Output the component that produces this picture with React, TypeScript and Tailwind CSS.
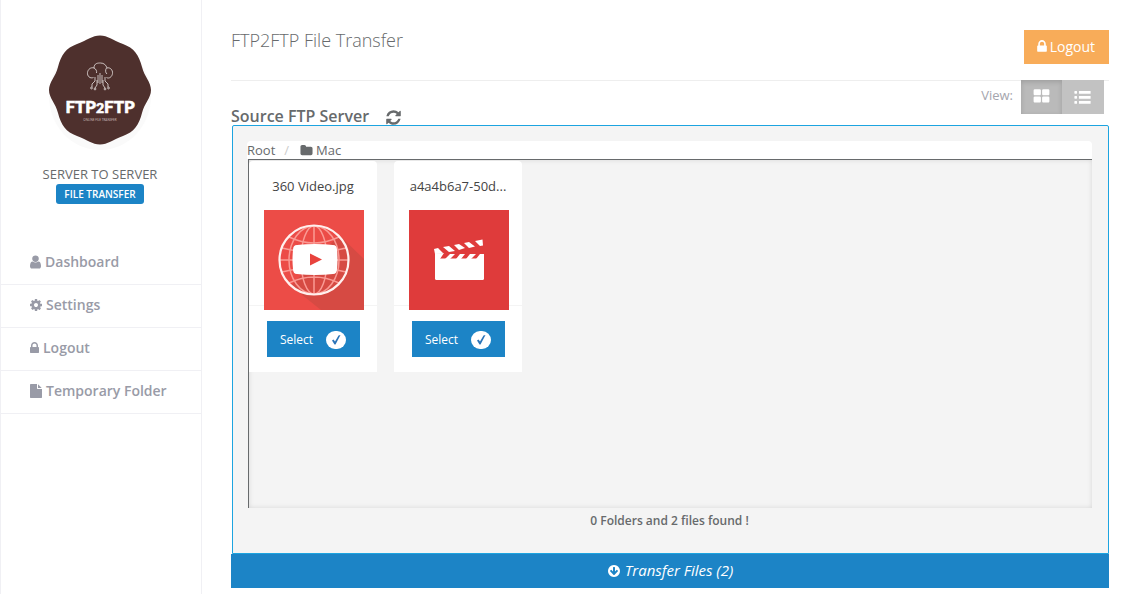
import { useState } from "react";
import type { ReactNode } from "react";
import clsx from "clsx";

const ICONS = {
  user: "M1536 1399q0 109-62.5 187t-150.5 78h-854q-88 0-150.5-78t-62.5-187q0-85 8.5-160.5t31.5-152 58.5-131 94-89 134.5-34.5q131 128 313 128t313-128q76 0 134.5 34.5t94 89 58.5 131 31.5 152 8.5 160.5zm-256-887q0 159-112.5 271.5t-271.5 112.5-271.5-112.5-112.5-271.5 112.5-271.5 271.5-112.5 271.5 112.5 112.5 271.5z",
  cog: "M1152 896q0-106-75-181t-181-75-181 75-75 181 75 181 181 75 181-75 75-181zm512-109v222q0 12-8 23t-20 13l-185 28q-19 54-39 91 35 50 107 138 10 12 10 25t-9 23q-27 37-99 108t-94 71q-12 0-26-9l-138-108q-44 23-91 38-16 136-29 186-7 28-36 28h-222q-14 0-24.5-8.5t-11.5-21.5l-28-184q-49-16-90-37l-141 107q-10 9-25 9-14 0-25-11-126-114-165-168-7-10-7-23 0-12 8-23 15-21 51-66.5t54-70.5q-27-50-41-99l-183-27q-13-2-21-12.5t-8-23.5v-222q0-12 8-23t19-13l186-28q14-46 39-92-40-57-107-138-10-12-10-24 0-10 9-23 26-36 98.5-107.5t94.5-71.5q13 0 26 10l138 107q44-23 91-38 16-136 29-186 7-28 36-28h222q14 0 24.5 8.5t11.5 21.5l28 184q49 16 90 37l142-107q9-9 24-9 13 0 25 10 129 119 165 170 7 8 7 22 0 12-8 23-15 21-51 66.5t-54 70.5q26 50 41 98l183 28q13 2 21 12.5t8 23.5z",
  lock: "M640 768h512v-192q0-106-75-181t-181-75-181 75-75 181v192zm832 96v576q0 40-28 68t-68 28h-960q-40 0-68-28t-28-68v-576q0-40 28-68t68-28h32v-192q0-184 132-316t316-132 316 132 132 316v192h32q40 0 68 28t28 68z",
  file: "M1152 512v-472q22 14 36 28l408 408q14 14 28 36h-472zm-128 32q0 40 28 68t68 28h544v1056q0 40-28 68t-68 28h-1344q-40 0-68-28t-28-68v-1600q0-40 28-68t68-28h800v544z",
  refresh: "M1639 1056q0 5-1 7-64 268-268 434.5t-478 166.5q-146 0-282.5-55t-243.5-157l-129 129q-19 19-45 19t-45-19-19-45v-448q0-26 19-45t45-19h448q26 0 45 19t19 45-19 45l-137 137q71 66 161 102t187 36q134 0 250-65t186-179q11-17 53-117 8-23 30-23h192q13 0 22.5 9.5t9.5 22.5zm25-800v448q0 26-19 45t-45 19h-448q-26 0-45-19t-19-45 19-45l138-138q-148-137-349-137-134 0-250 65t-186 179q-11 17-53 117-8 23-30 23h-199q-13 0-22.5-9.5t-9.5-22.5v-7q65-268 270-434.5t480-166.5q146 0 284 55.5t245 156.5l130-129q19-19 45-19t45 19 19 45z",
  folder: "M1728 608v704q0 92-66 158t-158 66h-1216q-92 0-158-66t-66-158v-960q0-92 66-158t158-66h320q92 0 158 66t66 158v32h672q92 0 158 66t66 158z",
  arrowDown: "M1412 897q0-27-18-45l-91-91q-18-18-45-18t-45 18l-189 189v-502q0-26-19-45t-45-19h-128q-26 0-45 19t-19 45v502l-189-189q-19-19-45-19t-45 19l-91 91q-18 18-18 45t18 45l362 362 91 91q18 18 45 18t45-18l91-91 362-362q18-18 18-45zm252-1q0 209-103 385.5t-279.5 279.5-385.5 103-385.5-103-279.5-279.5-103-385.5 103-385.5 279.5-279.5 385.5-103 385.5 103 279.5 279.5 103 385.5z",
  thLarge: "M832 1024v384q0 52-38 90t-90 38h-512q-52 0-90-38t-38-90v-384q0-52 38-90t90-38h512q52 0 90 38t38 90zm0-768v384q0 52-38 90t-90 38h-512q-52 0-90-38t-38-90v-384q0-52 38-90t90-38h512q52 0 90 38t38 90zm896 768v384q0 52-38 90t-90 38h-512q-52 0-90-38t-38-90v-384q0-52 38-90t90-38h512q52 0 90 38t38 90zm0-768v384q0 52-38 90t-90 38h-512q-52 0-90-38t-38-90v-384q0-52 38-90t90-38h512q52 0 90 38t38 90z",
  list: "M100 210h160q60 0 60 60v160q0 60-60 60h-160q-60 0-60-60v-160q0-60 60-60zM520 210h1232v280h-1232zM100 740h160q60 0 60 60v160q0 60-60 60h-160q-60 0-60-60v-160q0-60 60-60zM520 740h1232v280h-1232zM100 1270h160q60 0 60 60v160q0 60-60 60h-160q-60 0-60-60v-160q0-60 60-60zM520 1270h1232v280h-1232z",
};

type IconName = keyof typeof ICONS;

// viewBox is trimmed per icon so the glyph keeps its own advance width
function Icon({ name, box = "0 0 1792 1792", className }: { name: IconName; box?: string; className?: string }) {
  return (
    <svg viewBox={box} fill="currentColor" aria-hidden="true" className={clsx("shrink-0", className)}>
      <path d={ICONS[name]} />
    </svg>
  );
}

const NAV: { label: string; icon: IconName; box: string; size: string }[] = [
  { label: "Dashboard", icon: "user", box: "256 0 1280 1792", size: "w-[11px] h-4" },
  { label: "Settings", icon: "cog", box: "128 0 1536 1792", size: "w-3 h-[14px]" },
  { label: "Logout", icon: "lock", box: "320 0 1152 1792", size: "w-[9px] h-[14px]" },
  { label: "Temporary Folder", icon: "file", box: "128 0 1536 1792", size: "w-3 h-[14px]" },
];

function Logo() {
  return (
    <svg viewBox="0 0 110 120" className="h-[120px] w-[110px]" role="img" aria-label="FTP2FTP">
      <ellipse cx="55" cy="66" rx="51" ry="54" fill="#fafafa" />
      <path
        d="M55 5.500C63 5.500 67 10 78 14C89 18 94 25 97 37C99.500 47 106 52 106 60C106 68 99.500 73 97 83C94 95 89 102 78 106C67 110 63 114.500 55 114.500C47 114.500 43 110 32 106C21 102 16 95 13 83C10.500 73 4 68 4 60C4 52 10.500 47 13 37C16 25 21 18 32 14C43 10 47 5.500 55 5.500Z"
        fill="#4e302d"
      />
      <g fill="none" stroke="#e9e2e1" strokeWidth="0.800">
        <path d="M48.500 47.500C45 49 42 46 42.500 42.500C43 39 46 37 49 38C49 33 53 33 55.500 33C59 33 61 35 62 38C65 37 68 40 67.500 43.500C67 47 64 49 61.500 47.500M49 38C51 39 52 41 51.500 43M61.500 38C60 40 60.500 43 62 44" />
        <path d="M50 47v4l-3 3v3M53 45v8M55 43v11M57 45v8M60 47v4l3 3v3M52 50v5l-2 3M58 50v5l2 3" />
        <circle cx="46.500" cy="58" r="0.900" />
        <circle cx="50" cy="59" r="0.900" />
        <circle cx="60" cy="59" r="0.900" />
        <circle cx="63.500" cy="58" r="0.900" />
      </g>
      <text
        x="55"
        y="83"
        textAnchor="middle"
        fill="#fff"
        stroke="#fff"
        strokeWidth="0.600"
        className="font-['Lato',sans-serif] text-[17px] font-black"
      >
        FTP<tspan fontSize="14">2</tspan>FTP
      </text>
      <text x="55" y="91" textAnchor="middle" fill="#c9bcba" className="font-['Lato',sans-serif] text-[3px]">
        ONLINE FILE TRANSFER
      </text>
    </svg>
  );
}

function VideoThumb() {
  return (
    <svg viewBox="0 0 100 100" className="size-[100px]" aria-hidden="true">
      <path d="M0 0h100v100H0z" fill="#ec4c47" />
      <path d="M75 25L100 49V100H57L27 76Z" fill="#d64a43" />
      <g fill="none" stroke="#fa9a94" strokeWidth="1.500">
        <ellipse cx="50" cy="50" rx="13" ry="34" />
        <ellipse cx="50" cy="50" rx="25" ry="34" />
        <path d="M50 16v68M16 50h68M25 27q25 12 50 0M18 38q32 8 64 0M18 62q32-8 64 0M25 73q25-12 50 0" />
      </g>
      <circle cx="50" cy="50" r="34.500" fill="none" stroke="#fff0ee" strokeWidth="2.200" />
      <path d="M33 35Q51 33 69 35Q73 35 73 40Q74 50 73 59Q73 64 69 64Q51 66 33 64Q29 64 29 59Q28 50 29 40Q29 35 33 35Z" fill="#fff" />
      <path d="M46 43.500L58 49.500L46 55.500Z" fill="#e8433d" />
    </svg>
  );
}

function ClapperThumb() {
  return (
    <svg viewBox="0 0 100 100" className="size-[100px]" aria-hidden="true">
      <path d="M0 0h100v100H0z" fill="#df3b3b" />
      <path d="M26 48.500H75V68.500Q75 70 73.500 70H27.500Q26 70 26 68.500Z" fill="#fff" />
      <g fill="#fff">
        <path d="M25 39L29 38L34 43L26 44ZM26 44L35 43L31 49H26Z" />
        <path d="M34 37L40 36L46 41L40 42ZM45 35L50 34L56 38L50 40ZM55 33L60 32L66 36.500L60 38ZM66 31L73.500 29.500L74 35.500L71 36Z" />
        <path d="M41 44H46L41 49H36ZM51 44H56L52 49H47ZM61 44H67L62 49H57ZM71 44H75V49H67Z" />
      </g>
    </svg>
  );
}

function FileCard({ name, children }: { name: string; children: ReactNode }) {
  return (
    <li className="w-32 rounded-t bg-white text-center">
      <div className="border-b border-[#f4f4f4] px-[15px] pt-[15px]">
        <p className="h-5 whitespace-nowrap text-[13px] leading-5 text-[#444]">{name}</p>
        <div className="relative -mb-[5px] mt-[14px]">{children}</div>
      </div>
      <div className="flex justify-center py-[15px]">
        <button type="button" className="flex h-9 w-[93px] items-center justify-center gap-[13px] bg-[#1c84c6] pt-[2px] text-[12px] leading-5 text-white">
          Select
          <span className="flex h-[18px] w-5 items-center justify-center rounded-full bg-white">
            <svg viewBox="0 0 10 10" className="size-[10px]" aria-hidden="true">
              <path d="M1 5.500L2.500 4.500L4 6.500L7.500 0.500L9.500 0L4.500 9.500H3.500Z" fill="#2b74b8" />
            </svg>
          </span>
        </button>
      </div>
    </li>
  );
}

export default function App() {
  const [view, setView] = useState("grid");

  return (
    <div className="flex min-h-screen bg-white font-['Open_Sans',sans-serif] text-[13px] text-[#676a6c]">
      <aside className="w-[202px] shrink-0 border-x border-[#f0f0f4]">
        <div className="flex flex-col items-center pr-[2px] pt-[30px]">
          <Logo />
          <p className="mt-[14px] leading-5">SERVER TO SERVER</p>
          <span className="h-5 rounded-[3px] bg-[#1c84c6] px-2 text-[10px] font-semibold leading-5 text-white">FILE TRANSFER</span>
        </div>
        <nav className="mt-[38px]">
          {NAV.map((item) => (
            <a
              key={item.label}
              href="#"
              className="flex items-center gap-1 border-b border-[#f0f0f4] pb-3 pl-[29px] pt-[10px] text-[14px] font-semibold leading-5 text-[#999ba7]"
            >
              <Icon name={item.icon} box={item.box} className={item.size} />
              {item.label}
            </a>
          ))}
        </nav>
      </aside>

      <main className="min-w-0 flex-1 pl-[29px] pr-[21px]">
        <header className="flex h-20 items-start justify-between">
          <h1 className="mt-7 text-[18px] font-light leading-6">FTP2FTP File Transfer</h1>
          <button type="button" className="mt-[30px] flex h-[34px] items-center gap-[3px] bg-[#f8ac59] pb-px pl-[13px] pr-[14px] text-[14px] text-white">
            <Icon name="lock" box="320 0 1152 1792" className="h-[15px] w-[10px]" />
            Logout
          </button>
        </header>

        {/* Panel title and view switch */}
        <div className="flex h-[45px] items-start justify-between border-t border-[#eee]">
          <div className="mt-[25px] flex items-center gap-4">
            <h2 className="text-[16px] font-semibold leading-5 text-[#676a6c]">Source FTP Server</h2>
            <button type="button" aria-label="Refresh" className="pt-[2px]">
              <Icon name="refresh" className="size-[17px]" />
            </button>
          </div>
          <div className="-mt-px mr-[5px] flex items-start">
            <span className="mr-2 mt-[5px] text-[13px] leading-5 text-[#a5a5ad]">View:</span>
            <button
              type="button"
              aria-label="Grid view"
              aria-pressed={view === "grid"}
              onClick={() => setView("grid")}
              className={clsx(
                "flex h-[34px] w-[41px] items-center justify-center pb-[2px] text-white",
                view === "grid" ? "bg-[#bababa] shadow-[inset_0_2px_5px_rgba(0,0,0,0.15)]" : "bg-[#c2c2c2]"
              )}
            >
              <Icon name="thLarge" className="size-[17px]" />
            </button>
            <button
              type="button"
              aria-label="List view"
              aria-pressed={view === "list"}
              onClick={() => setView("list")}
              className={clsx(
                "flex h-[34px] w-[42px] items-center justify-center pr-[2px] text-white",
                view === "list" ? "bg-[#bababa] shadow-[inset_0_2px_5px_rgba(0,0,0,0.15)]" : "bg-[#c2c2c2]"
              )}
            >
              <Icon name="list" className="size-[17px]" />
            </button>
          </div>
        </div>

        <section className="ml-px rounded-t-[2px] border border-[#1ca4e0] bg-[#f4f4f4] pl-[14px] pr-4 pt-[15px]">
          <ol className="flex h-[18px] items-center rounded-t bg-white text-[13px] leading-[18px]">
            <li>
              <a href="#">Root</a>
            </li>
            <li className="mx-2 px-px text-[#ccc]">/</li>
            <li className="ml-[2px] flex items-center gap-[3px]">
              <Icon name="folder" className="size-[13px]" />
              Mac
            </li>
          </ol>

          <ul className="ml-px flex h-[349px] items-start gap-[17px] overflow-auto border-l border-t border-[#676a6c] pt-px shadow-[inset_0_0_5px_rgba(0,0,0,0.12)]">
            <FileCard name="360 Video.jpg">
              <VideoThumb />
            </FileCard>
            <FileCard name="a4a4b6a7-50d...">
              <ClapperThumb />
            </FileCard>
          </ul>

          <p className="mt-[3px] pb-[22px] text-center text-[12px] font-semibold leading-5">0 Folders and 2 files found !</p>
        </section>

        <button type="button" className="flex h-[34px] w-full items-center justify-center gap-1 bg-[#1c84c6] pb-px text-[15px] italic text-white">
          <Icon name="arrowDown" className="size-[14px]" />
          Transfer Files (2)
        </button>
      </main>
    </div>
  );
}
